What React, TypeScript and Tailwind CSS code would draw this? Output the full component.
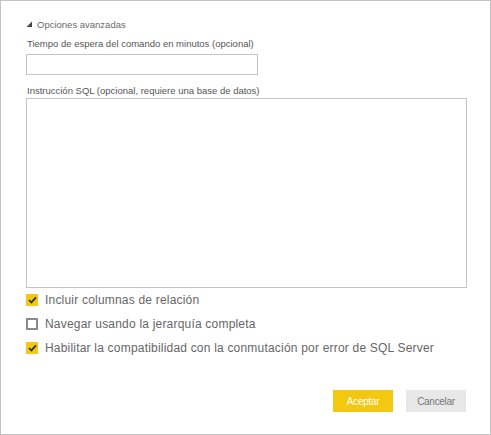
import React from "react";

const Check = ({ checked }: { checked: boolean }) =>
  checked ? (
    <span className="w-[12px] h-[12px] bg-[#f2c811] flex items-center justify-center shrink-0">
      <svg width="9" height="8" viewBox="0 0 9 8">
        <path d="M1 4.2 L3.4 6.4 L8 1.4" fill="none" stroke="#333" strokeWidth="1.8" />
      </svg>
    </span>
  ) : (
    <span className="w-[12px] h-[12px] border-2 border-[#8a8a8a] bg-white shrink-0" />
  );

const options = [
  { label: "Incluir columnas de relación", checked: true },
  { label: "Navegar usando la jerarquía completa", checked: false },
  { label: "Habilitar la compatibilidad con la conmutación por error de SQL Server", checked: true },
];

export default function App() {
  return (
    <div
      className="w-[491px] h-[435px] border border-[#c3c3c3] bg-white text-[#666] flex flex-col"
      style={{ fontFamily: '"Liberation Sans", Arial, sans-serif' }}
    >
      <div className="pl-[25px] pt-[16px] h-[30px] flex items-center gap-[4px] text-[9.5px] leading-[13px] text-[#6a6a6a]">
        <svg width="7" height="7" viewBox="0 0 7 7" className="mt-[1px]">
          <path d="M6 0.5 L6 6 L0.5 6 Z" fill="#444" />
        </svg>
        <span>Opciones avanzadas</span>
      </div>
      <div className="pl-[26px] pt-[6px] text-[9.5px] leading-[13px] text-[#555]">
        Tiempo de espera del comando en minutos (opcional)
      </div>
      <div className="ml-[25px] mt-[4px] w-[232px] h-[21px] border border-[#c3c3c3]" />
      <div className="pl-[26px] pt-[9px] text-[9.5px] leading-[13px] text-[#555]">
        Instrucción SQL (opcional, requiere una base de datos)
      </div>
      <div className="ml-[25px] mt-[1px] w-[441px] h-[190px] border border-[#c3c3c3]" />
      <div className="pl-[25px] pt-[6px] flex flex-col gap-[12px]">
        {options.map((o) => (
          <div key={o.label} className="flex items-center gap-[7px] h-[12px]">
            <Check checked={o.checked} />
            <span className="text-[12px] leading-[14px] text-[#666] tracking-[0.2px]">{o.label}</span>
          </div>
        ))}
      </div>
      <div className="flex justify-end gap-[13px] pr-[24px] mt-[36px]">
        <button className="w-[60px] h-[22px] bg-[#f2c811] text-white text-[10px] tracking-[-0.3px]">
          Aceptar
        </button>
        <button className="w-[60px] h-[22px] bg-[#e8e8e8] text-[#777] text-[10px] tracking-[-0.3px]">
          Cancelar
        </button>
      </div>
    </div>
  );
}
